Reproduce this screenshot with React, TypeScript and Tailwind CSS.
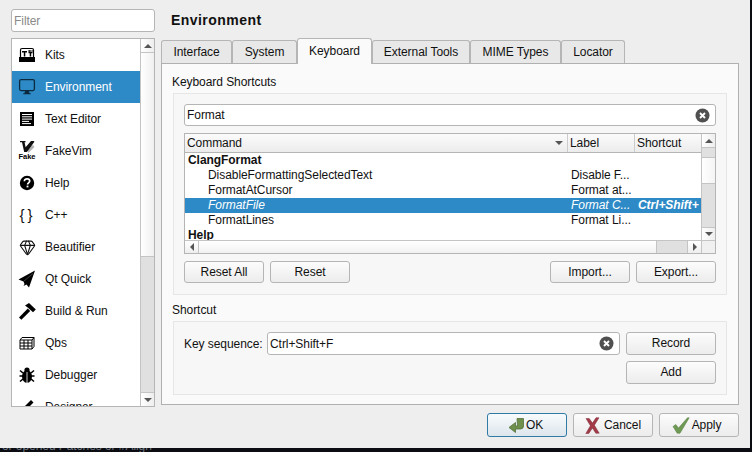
import { Gem } from "lucide-react";

const sidebarItems = [
  { name: "Kits", icon: <KitsIcon /> },
  { name: "Environment", icon: <MonitorIcon />, selected: true },
  { name: "Text Editor", icon: <EditorIcon /> },
  { name: "FakeVim", icon: <FakeVimIcon /> },
  { name: "Help", icon: <HelpIcon /> },
  { name: "C++", icon: <span className="text-[15px] leading-none tracking-[3px] pl-[1px] -mt-[2px]">{"{}"}</span> },
  { name: "Beautifier", icon: <Gem size={17} strokeWidth={1.6} color="#111" /> },
  { name: "Qt Quick", icon: <PlaneIcon /> },
  { name: "Build & Run", icon: <HammerIcon /> },
  { name: "Qbs", icon: <QbsIcon /> },
  { name: "Debugger", icon: <BugIcon /> },
  { name: "Designer", icon: <PencilIcon /> },
];

const tabs = ["Interface", "System", "Keyboard", "External Tools", "MIME Types", "Locator"];
const tabWidths = ["w-[71px]", "w-[65px]", "w-[75px]", "w-[98px]", "w-[91px]", "w-[64px]"];

const commands = [
  { command: "DisableFormattingSelectedText", label: "Disable F..." },
  { command: "FormatAtCursor", label: "Format at..." },
  { command: "FormatFile", label: "Format C...", shortcut: "Ctrl+Shift+", selected: true },
  { command: "FormatLines", label: "Format Li..." },
];

function KitsIcon() {
  return (
    <svg width="20" height="20" viewBox="0 0 20 20">
      <rect x="2" y="12" width="16" height="5" fill="#000" />
      <path d="M3.5 12V5a1.5 1.5 0 0 1 1.5-1.5h10A1.5 1.5 0 0 1 16.5 5v7" fill="none" stroke="#000" strokeWidth="1.2" />
      <path d="M5 6h5v1.6H8.3V11.5H6.8V7.6H5z" fill="#000" />
      <path d="M11.5 5v3.2h1.2v3.3h1.5V8.2h1.3V5h-.9v2h-.6V5h-.6v2h-.6V5z" fill="#000" />
    </svg>
  );
}

function MonitorIcon() {
  return (
    <svg width="20" height="20" viewBox="0 0 20 20">
      <rect x="2.6" y="2.6" width="14.8" height="11" rx="1.5" fill="none" stroke="#0b2a40" strokeWidth="1.3" />
      <path d="M8.2 14h3.6l.8 2.2h1.2v1H6.2v-1h1.2z" fill="#0b2a40" />
    </svg>
  );
}

function EditorIcon() {
  return (
    <svg width="20" height="20" viewBox="0 0 20 20">
      <rect x="3" y="3" width="14" height="14" fill="#000" />
      <path d="M5 5.5h10M5 7.8h10M5 10.1h10M5 12.4h7M5 14.6h9" stroke="#fff" strokeWidth="1" />
    </svg>
  );
}

function FakeVimIcon() {
  return (
    <svg width="20" height="20" viewBox="0 0 20 20">
      <path d="M10 7l6-3 1.5 2-6 6z" fill="#b5b5b5" />
      <path d="M3 0h5.5v1.2H7.6l1 5L14 0h3.2v1L10 11H7.2L5 1.2H3z" fill="#111" />
      <text x="10" y="18" textAnchor="middle" fontSize="7.5" fontWeight="700" fill="#000" fontFamily="Liberation Sans, sans-serif">Fake</text>
    </svg>
  );
}

function HelpIcon() {
  return (
    <svg width="20" height="20" viewBox="0 0 20 20">
      <circle cx="10" cy="10" r="7.2" fill="#000" />
      <path d="M7.4 8.2c0-1.6 1.2-2.4 2.7-2.4s2.6.9 2.6 2.2c0 1.9-2.1 1.8-2.1 3.5" fill="none" stroke="#fff" strokeWidth="1.7" />
      <rect x="9.6" y="12.6" width="1.8" height="1.8" fill="#fff" />
    </svg>
  );
}

function PlaneIcon() {
  return (
    <svg width="20" height="20" viewBox="0 0 20 20">
      <path d="M18 1.5 1.5 10.5l5 2 1 2.5-1 2 3-1.5 2.5 3z" fill="#000" />
      <path d="M7 12 16 4.5" stroke="#666" strokeWidth="0.6" />
    </svg>
  );
}

function HammerIcon() {
  return (
    <svg width="20" height="20" viewBox="0 0 20 20">
      <path d="M2 16.5 10.8 7.5l2.4 2.4L4.4 18.8z" fill="#000" />
      <path d="M8 4.5 12 2l6.8 6.5-2.8 2.8-5-4.6z" fill="#000" />
    </svg>
  );
}

function QbsIcon() {
  return (
    <svg width="20" height="20" viewBox="0 0 20 20">
      <path d="M3 7h12v9H3zM3 10h12M3 13h12M7 7v9M11 7v9" fill="none" stroke="#000" strokeWidth="1" />
      <path d="M3 7l2-2.500h12v9L15 16M15 7l2-2.500" fill="none" stroke="#000" strokeWidth="1" />
    </svg>
  );
}

function BugIcon() {
  return (
    <svg width="20" height="20" viewBox="0 0 20 20">
      <path d="M3 5.5 6 8M17 5.5 14 8M2.5 11h4M17.5 11h-4M3 16.5l3-2.5M17 16.5 14 14" stroke="#000" strokeWidth="1.6" />
      <ellipse cx="10" cy="11.5" rx="5" ry="6.3" fill="#000" />
      <circle cx="10" cy="5" r="2.6" fill="#000" />
      <path d="M10 7v11" stroke="#fff" strokeWidth="0.8" />
    </svg>
  );
}

function PencilIcon() {
  return (
    <svg width="20" height="20" viewBox="0 0 20 20">
      <path d="M14 3l2.5 2.5L6 16l-3.5 1 1-3.5z" fill="#000" />
    </svg>
  );
}

function ClearIcon() {
  return (
    <svg width="15" height="15" viewBox="0 0 15 15">
      <circle cx="7.5" cy="7.5" r="7" fill="#505050" />
      <path d="M5 5l5 5M10 5l-5 5" stroke="#fff" strokeWidth="1.9" />
    </svg>
  );
}

function OkIcon() {
  return (
    <svg width="17" height="17" viewBox="0 0 17 17">
      <path d="M9 1.500h6.500V9a3 3 0 0 1-3 3H7.500v3.500L1 10.500l6.500-5V9h2z" fill="#6f8f4c" stroke="#56703a" strokeWidth="0.8" />
    </svg>
  );
}

function CancelIcon() {
  return (
    <svg width="15" height="17" viewBox="0 0 15 17">
      <path d="M1 1.500h3.200L7.500 6 11 .8h3L9.400 8.200l4.800 8h-3.400L7.400 11l-3.600 5.500H.8l4.600-7.800z" fill="#a23a48" stroke="#7f2c38" strokeWidth="0.5" />
    </svg>
  );
}

function ApplyIcon() {
  return (
    <svg width="18" height="17" viewBox="0 0 18 17">
      <path d="M1 9.500 3.800 7.500 6.500 11 15.500.8h1.700L8 16.200H5.200z" fill="#6f9a55" stroke="#56793f" strokeWidth="0.5" />
    </svg>
  );
}

function Arrow({ dir }: { dir: "up" | "down" | "left" | "right" }) {
  const points = {
    up: "4,0 8,4 0,4",
    down: "0,0 8,0 4,4",
    left: "4,0 4,8 0,4",
    right: "0,0 4,4 0,8",
  }[dir];
  const wide = dir === "up" || dir === "down";
  return (
    <svg width={wide ? 8 : 4} height={wide ? 4 : 8} viewBox={wide ? "0 0 8 4" : "0 0 4 8"}>
      <polygon points={points} fill="#555" />
    </svg>
  );
}

function Button({ children, className }: { children: React.ReactNode; className: string }) {
  return (
    <button className={`flex items-center justify-center rounded-[3px] border border-[#b5b5b5] bg-gradient-to-b from-[#fcfcfc] to-[#ececec] text-[#111] ${className}`}>
      {children}
    </button>
  );
}

export default function App() {
  return (
    <div className="w-[752px] h-[452px] overflow-hidden bg-[#0b0d12] text-[12px] tracking-[-0.06px] text-[#111] [font-family:'Liberation_Sans',Arial,sans-serif]">
      <div className="w-[750px] h-[448px] bg-[#eeeeee] pt-[9px] px-[11px]">
        <div className="flex gap-[6px] h-[398px]">
          {/* Sidebar */}
          <div className="w-[144px] flex flex-col gap-[6px]">
            <div className="h-[23px] rounded-[3px] border border-[#b5b5b5] bg-white flex items-center pl-[2px] text-[#8a8a8a]">
              Filter
            </div>
            <div className="h-[369px] border border-[#b5b5b5] bg-white flex">
              <div className="w-[128px] overflow-hidden">
                {sidebarItems.map((item) => (
                  <div
                    key={item.name}
                    className={`h-[32px] shrink-0 flex items-center pl-[5px] gap-[8px] ${item.selected ? "bg-[#2e8ac6] text-white" : ""}`}
                  >
                    <span className="w-[20px] h-[20px] flex items-center justify-center">{item.icon}</span>
                    <span>{item.name}</span>
                  </div>
                ))}
              </div>
              <div className="w-[14px] border-l border-[#c4c4c4] flex flex-col">
                <div className="h-[14px] flex items-center justify-center border-b border-[#c4c4c4] bg-gradient-to-r from-white to-[#eeeeee]">
                  <Arrow dir="up" />
                </div>
                <div className="h-[204px] border-b border-[#c4c4c4] bg-gradient-to-r from-white to-[#f0f0f0]" />
                <div className="flex-1 bg-[#e0e0e0]" />
                <div className="h-[14px] flex items-center justify-center border-t border-[#c4c4c4] bg-gradient-to-r from-white to-[#eeeeee]">
                  <Arrow dir="down" />
                </div>
              </div>
            </div>
          </div>

          {/* Page */}
          <div className="w-[578px] flex flex-col">
            <div className="h-[29px] pl-[10px] pt-[3px] text-[14px] leading-[16px] font-bold tracking-[0.45px]">Environment</div>
            <div className="h-[25px] flex items-end">
              {tabs.map((tab, i) =>
                tab === "Keyboard" ? (
                  <div
                    key={tab}
                    className={`${tabWidths[i]} h-[26px] -mb-px relative rounded-t-[3px] border border-b-0 border-[#b5b5b5] bg-[#fafafa] flex items-center justify-center pb-[2px]`}
                  >
                    {tab}
                  </div>
                ) : (
                  <div
                    key={tab}
                    className={`${tabWidths[i]} h-[23px] rounded-t-[3px] border border-b-0 border-[#b5b5b5] bg-[#e8e8e8] flex items-center justify-center`}
                  >
                    {tab}
                  </div>
                ),
              )}
            </div>
            <div className="h-[342px] border border-[#b0b0b0] bg-[#fafafa]">
              <div className="h-[29px] pl-[10px] pb-[4px] flex items-end leading-[14px]">Keyboard Shortcuts</div>
              <div className="ml-[11px] w-[554px] h-[202px] border border-[#e6e6e6] bg-[#f7f7f7] p-[10px]">
                <div className="h-[22px] rounded-[3px] border border-[#b5b5b5] bg-white flex items-center justify-between pl-[2px] pr-[5px]">
                  <span>Format</span>
                  <ClearIcon />
                </div>

                {/* Shortcut table */}
                <div className="mt-[7px] h-[121px] border border-[#b5b5b5] bg-white flex flex-col">
                  <div className="h-[106px] flex">
                    <div className="w-[516px]">
                      <div className="h-[19px] flex border-b border-[#b5b5b5] bg-gradient-to-b from-[#fbfbfb] to-[#ececec]">
                        <div className="w-[383px] pl-[2px] pr-[4px] flex items-center justify-between border-r border-[#cccccc]">
                          <span>Command</span>
                          <Arrow dir="down" />
                        </div>
                        <div className="w-[67px] pl-[2px] flex items-center border-r border-[#cccccc]">Label</div>
                        <div className="flex-1 pl-[2px] flex items-center">Shortcut</div>
                      </div>
                      <div className="h-[87px] overflow-hidden">
                        <div className="h-[15px] pl-[3px] font-bold leading-[14px]">ClangFormat</div>
                        {commands.map((row) => (
                          <div
                            key={row.command}
                            className={`h-[15px] flex leading-[14px] ${row.selected ? "bg-[#2e8ac6] text-white italic" : ""}`}
                          >
                            <div className="w-[386px] pl-[23px]">{row.command}</div>
                            <div className="w-[63px] whitespace-nowrap">{row.label}</div>
                            <div className="flex-1 pl-[4px] font-bold whitespace-nowrap overflow-hidden">{row.shortcut}</div>
                          </div>
                        ))}
                        <div className="h-[15px] pl-[3px] font-bold leading-[14px]">Help</div>
                      </div>
                    </div>
                    <div className="w-[14px] border-l border-[#c4c4c4] flex flex-col">
                      <div className="h-[14px] flex items-center justify-center border-b border-[#c4c4c4] bg-gradient-to-r from-white to-[#eeeeee]">
                        <Arrow dir="up" />
                      </div>
                      <div className="h-[9px] bg-[#e0e0e0]" />
                      <div className="h-[27px] border-y border-[#c4c4c4] bg-gradient-to-r from-white to-[#f4f4f4]" />
                      <div className="flex-1 bg-[#e0e0e0]" />
                      <div className="h-[13px] flex items-center justify-center border-t border-[#c4c4c4] bg-gradient-to-r from-white to-[#eeeeee]">
                        <Arrow dir="down" />
                      </div>
                    </div>
                  </div>
                  <div className="h-[13px] flex border-t border-[#c4c4c4]">
                    <div className="w-[14px] flex items-center justify-center border-r border-[#c4c4c4] bg-gradient-to-b from-white to-[#eeeeee]">
                      <Arrow dir="left" />
                    </div>
                    <div className="w-[457px] bg-gradient-to-b from-white to-[#f2f2f2]" />
                    <div className="w-[31px] border-l border-[#c4c4c4] bg-[#e0e0e0]" />
                    <div className="w-[14px] flex items-center justify-center border-l border-[#c4c4c4] bg-gradient-to-b from-white to-[#eeeeee]">
                      <Arrow dir="right" />
                    </div>
                    <div className="flex-1 border-l border-[#c4c4c4] bg-[#f0f0f0]" />
                  </div>
                </div>

                <div className="mt-[7px] flex gap-[6px]">
                  <Button className="w-[80px] h-[22px]">Reset All</Button>
                  <Button className="w-[80px] h-[22px]">Reset</Button>
                  <div className="flex-1" />
                  <Button className="w-[80px] h-[22px]">Import...</Button>
                  <Button className="w-[80px] h-[22px]">Export...</Button>
                </div>
              </div>

              <div className="h-[26px] pl-[10px] pb-[4px] flex items-end leading-[14px]">Shortcut</div>
              <div className="ml-[11px] w-[554px] h-[74px] border border-[#e6e6e6] bg-[#f7f7f7] p-[10px] flex gap-[6px]">
                <div className="w-[436px] h-[23px] flex items-center">
                  <span className="w-[83px]">Key sequence:</span>
                  <div className="flex-1 h-[23px] rounded-[3px] border border-[#b5b5b5] bg-white flex items-center justify-between pl-[2px] pr-[5px]">
                    <span>Ctrl+Shift+F</span>
                    <ClearIcon />
                  </div>
                </div>
                <div className="flex-1 flex flex-col gap-[6px]">
                  <Button className="w-[90px] h-[23px] pb-[2px]">Record</Button>
                  <Button className="w-[90px] h-[23px] pb-[2px]">Add</Button>
                </div>
              </div>
            </div>
          </div>
        </div>

        {/* Dialog buttons */}
        <div className="mt-[6px] flex justify-end gap-[6px]">
          <button className="w-[80px] h-[24px] flex items-center justify-center gap-[1px] pr-[3px] rounded-[3px] border border-[#2f7ba6] bg-gradient-to-b from-[#f8fbfd] to-[#dde6ec]">
            <OkIcon />
            OK
          </button>
          <Button className="w-[80px] h-[24px] gap-[4px]">
            <CancelIcon />
            Cancel
          </Button>
          <Button className="w-[80px] h-[24px] gap-[2px] pr-[5px]">
            <ApplyIcon />
            Apply
          </Button>
        </div>
      </div>
      <div className="h-[4px] overflow-hidden pl-[2px] text-[#6f7680] text-[12px] leading-[14px]">
        <div className="-mt-[9px] whitespace-nowrap">or opened Patches or #Align</div>
      </div>
    </div>
  );
}
